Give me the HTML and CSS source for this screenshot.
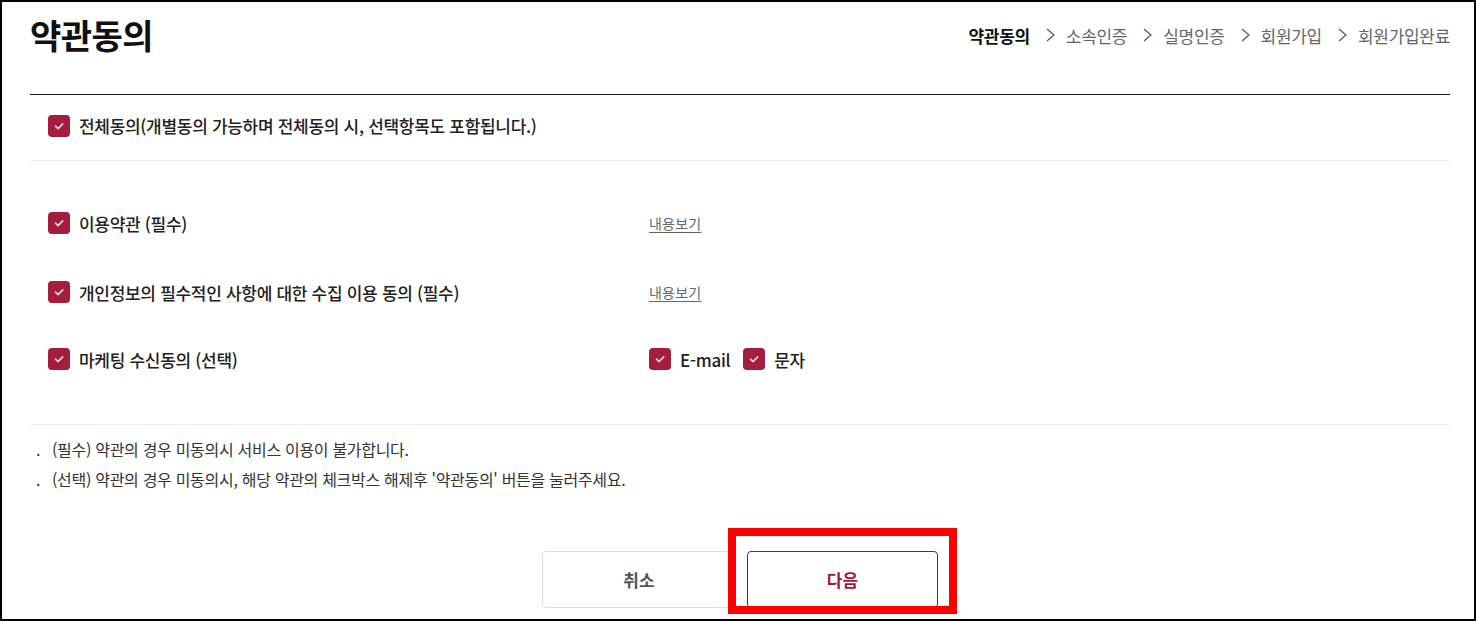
FILE: index.html
```html
<!doctype html>
<html lang="ko">
<head>
<meta charset="utf-8">
<meta name="viewport" content="width=device-width">
<title>약관동의</title>
<link rel="stylesheet" href="styles.css">
</head>
<body>
<div class="frame">
  <div class="wrap">
    <div class="head">
      <h1 class="title">약관동의</h1>
      <ol class="steps">
        <li class="on">약관동의</li>
        <li><svg class="arr" viewBox="0 0 9 14"><path d="M1 1l7 6-7 6" fill="none" stroke="#555" stroke-width="1.2"/></svg>소속인증</li>
        <li><svg class="arr" viewBox="0 0 9 14"><path d="M1 1l7 6-7 6" fill="none" stroke="#555" stroke-width="1.2"/></svg>실명인증</li>
        <li><svg class="arr" viewBox="0 0 9 14"><path d="M1 1l7 6-7 6" fill="none" stroke="#555" stroke-width="1.2"/></svg>회원가입</li>
        <li><svg class="arr" viewBox="0 0 9 14"><path d="M1 1l7 6-7 6" fill="none" stroke="#555" stroke-width="1.2"/></svg>회원가입완료</li>
      </ol>
    </div>

    <div class="all">
      <label class="chk"><span class="box"><svg viewBox="0 0 22 22"><path d="M7.5 11.2l2.6 2.4 4.6-4.7" fill="none" stroke="#f3dde2" stroke-width="1.6" stroke-linecap="round" stroke-linejoin="round"/></svg></span>전체동의(개별동의 가능하며 전체동의 시, 선택항목도 포함됩니다.)</label>
    </div>

    <div class="list">
      <div class="row">
        <label class="chk"><span class="box"><svg viewBox="0 0 22 22"><path d="M7.5 11.2l2.6 2.4 4.6-4.7" fill="none" stroke="#f3dde2" stroke-width="1.6" stroke-linecap="round" stroke-linejoin="round"/></svg></span>이용약관 (필수)</label>
        <a class="more" href="#">내용보기</a>
      </div>
      <div class="row">
        <label class="chk"><span class="box"><svg viewBox="0 0 22 22"><path d="M7.5 11.2l2.6 2.4 4.6-4.7" fill="none" stroke="#f3dde2" stroke-width="1.6" stroke-linecap="round" stroke-linejoin="round"/></svg></span>개인정보의 필수적인 사항에 대한 수집 이용 동의 (필수)</label>
        <a class="more" href="#">내용보기</a>
      </div>
      <div class="row">
        <label class="chk"><span class="box"><svg viewBox="0 0 22 22"><path d="M7.5 11.2l2.6 2.4 4.6-4.7" fill="none" stroke="#f3dde2" stroke-width="1.6" stroke-linecap="round" stroke-linejoin="round"/></svg></span>마케팅 수신동의 (선택)</label>
        <div class="opts">
          <label class="chk sub"><span class="box"><svg viewBox="0 0 22 22"><path d="M7.5 11.2l2.6 2.4 4.6-4.7" fill="none" stroke="#f3dde2" stroke-width="1.6" stroke-linecap="round" stroke-linejoin="round"/></svg></span>E-mail</label>
          <label class="chk sub"><span class="box"><svg viewBox="0 0 22 22"><path d="M7.5 11.2l2.6 2.4 4.6-4.7" fill="none" stroke="#f3dde2" stroke-width="1.6" stroke-linecap="round" stroke-linejoin="round"/></svg></span>문자</label>
        </div>
      </div>
    </div>

    <ul class="notes">
      <li>(필수) 약관의 경우 미동의시 서비스 이용이 불가합니다.</li>
      <li>(선택) 약관의 경우 미동의시, 해당 약관의 체크박스 해제후 '약관동의' 버튼을 눌러주세요.</li>
    </ul>

    <div class="btns">
      <button class="btn" type="button">취소</button>
      <button class="btn next" type="button">다음</button>
    </div>
  </div>
  <div class="mark"></div>
</div>
</body>
</html>
```

FILE: styles.css
```css
*{box-sizing:border-box}
html,body{margin:0; padding:0; background:#fff}
body{font-family:"Noto Sans CJK KR","Noto Sans",sans-serif; color:#222}
.frame{position:relative; width:1476px; height:621px; border:2px solid #000; overflow:hidden}
.wrap{margin:0 24px 0 28px}

.head{display:flex; justify-content:space-between; align-items:center; height:93px; padding-bottom:26px; border-bottom:1px solid #222}
.title{margin:0; font-size:34px; font-weight:700; letter-spacing:-0.5px; color:#111; line-height:1}
.steps{display:flex; align-items:center; margin:0; padding:0; list-style:none; font-size:17px; color:#666; letter-spacing:-0.3px}
.steps li{display:flex; align-items:center}
.steps .on{color:#111; font-weight:700}
.arr{width:9px; height:14px; margin:0 11px 0 16px}

.chk{display:inline-flex; align-items:center; font-size:17px; font-weight:500; color:#222; letter-spacing:-0.3px; cursor:pointer}
.box{display:block; flex:none; width:22px; height:22px; margin-right:9px; border-radius:4px; background:#a51d3c}
.box svg{display:block; width:22px; height:22px}

.all{height:66px; padding:18px 0 0 18px; border-bottom:1px solid #eee}

.list{padding:40px 0 43px 18px; border-bottom:1px solid #eee}
.row{display:grid; grid-template-columns:601px 1fr; align-items:center; height:44px}
.row + .row{margin-top:25px}
.row:last-child{margin-top:23px}
.more{font-size:14px; color:#666; text-decoration:underline; text-underline-offset:3px; letter-spacing:0.2px}
.opts{display:flex; gap:13px}

.notes{margin:0; padding:9px 0 0 6px; list-style:none; font-size:16px; line-height:30px; color:#333; letter-spacing:-0.3px}
.notes li::before{content:"."; display:inline-block; width:16px}

.btns{display:flex; justify-content:center; gap:11px; margin-top:57px}
.btn{width:194px; height:57px; border:1px solid #ddd; border-radius:4px; background:#fff; font:700 17px "Noto Sans CJK KR",sans-serif; color:#555}
.btn.next{width:191px; border-color:#8c1738; color:#a3173f}

.mark{position:absolute; left:726px; top:526px; width:229px; height:86px; border:8px solid #f00}
```
